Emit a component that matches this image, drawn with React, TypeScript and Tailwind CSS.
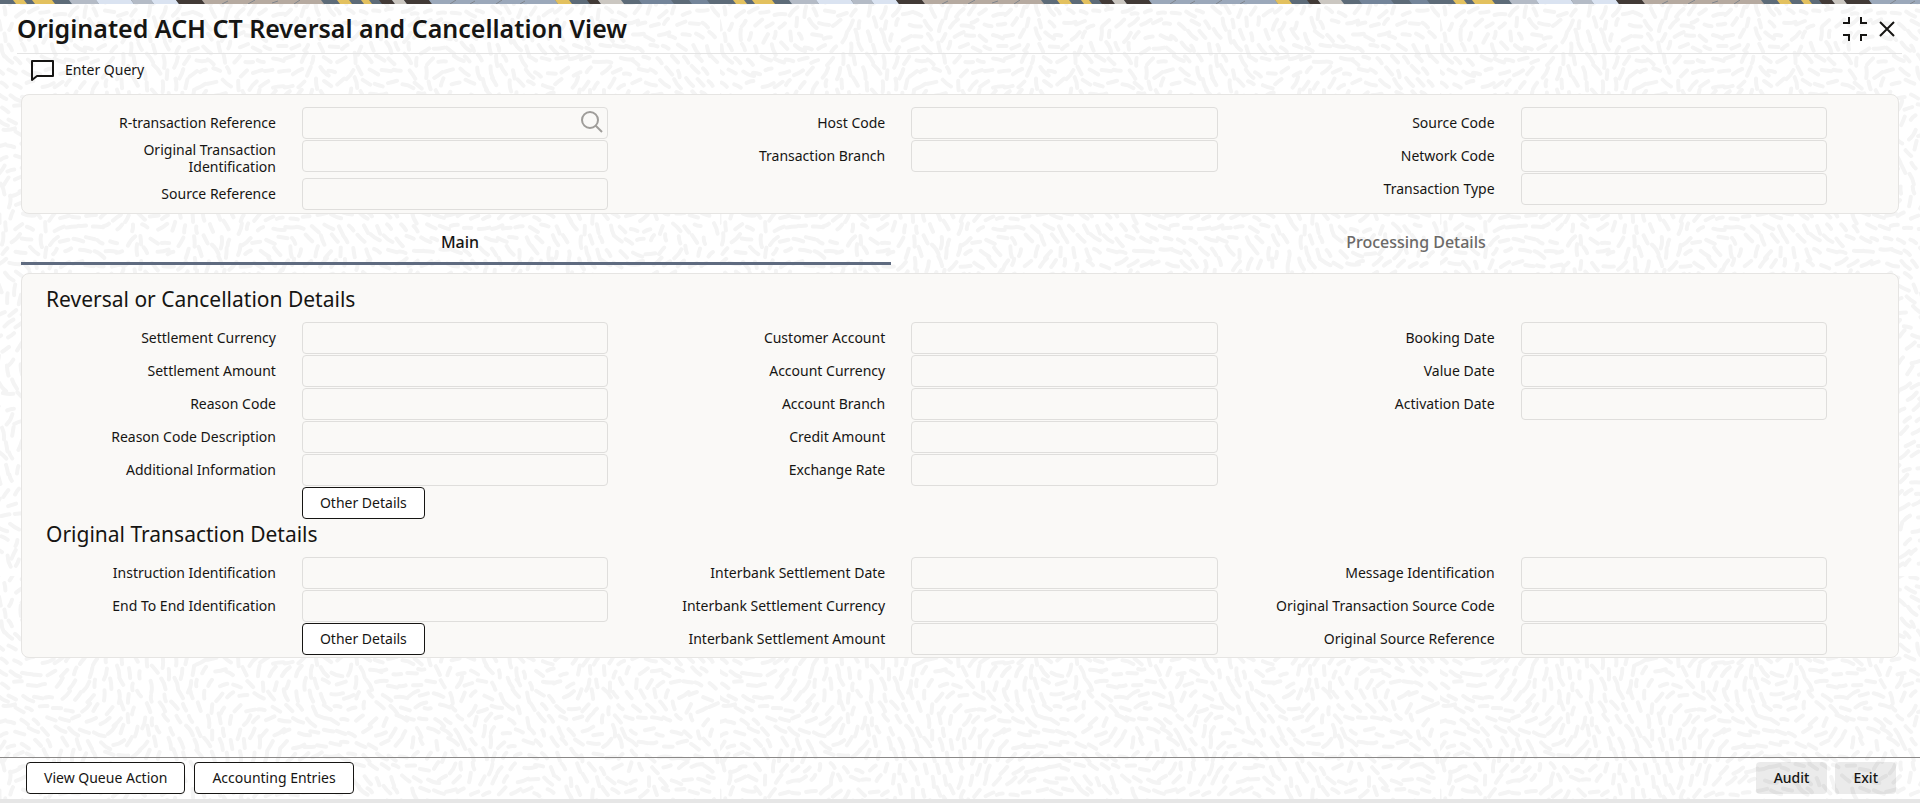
import { useState, type FormEvent, type ReactNode } from "react";

const TILE_W = 720;
const TILE_H = 576;

/* Short strokes that follow a smooth, tileable direction field */
function buildStrokes() {
  const cols = 56;
  const rows = 48;
  let d = "";
  for (let row = 0; row < rows; row++) {
    for (let col = 0; col < cols; col++) {
      const noise = Math.abs(Math.sin(row * 127 + col * 311) * 4375) % 1;
      const drift = Math.abs(Math.sin(row * 269 + col * 183) * 2713) % 1;
      const x = (col + (row % 2) / 2 + (noise - 0.5) * 0.5) * (TILE_W / cols);
      const y = (row + (drift - 0.5) * 0.5) * (TILE_H / rows);
      const u = (x / TILE_W) * Math.PI * 2;
      const v = (y / TILE_H) * Math.PI * 2;
      const angle =
        1.6 * Math.sin(3 * u + Math.sin(2 * v)) +
        1.2 * Math.cos(2 * v + Math.sin(2 * u)) +
        0.8 * Math.sin(4 * u - 3 * v) +
        (drift - 0.5) * 0.7;
      const half = 3 + noise * 3;
      const dx = Math.cos(angle) * half;
      const dy = Math.sin(angle) * half;
      const bend = (noise - 0.5) * 0.6;
      d += `M${(x - dx).toFixed(1)} ${(y - dy).toFixed(1)}Q${(x - dy * bend).toFixed(1)} ${(y + dx * bend).toFixed(1)} ${(x + dx).toFixed(1)} ${(y + dy).toFixed(1)}`;
    }
  }
  return d;
}

const strokes = buildStrokes();

/* [start, end, colour] of each slanted band in the top strip */
const bands: [number, number, string][] = [
  [14, 25, "#e3c15f"],
  [33, 53, "#e3c15f"],
  [70, 97, "#b4bbc6"],
  [97, 132, "#dae3f1"],
  [132, 152, "#b4bbc6"],
  [152, 177, "#dae3f1"],
  [177, 203, "#423a36"],
  [203, 322, "#b6aaa0"],
  [338, 350, "#e3c15f"],
  [362, 370, "#e3c15f"],
  [380, 393, "#423a36"],
  [393, 405, "#cbc7c1"],
  [405, 430, "#423a36"],
  [430, 556, "#9ba8ba"],
  [556, 570, "#e3c15f"],
  [588, 599, "#423a36"],
  [599, 622, "#cbc7c1"],
  [640, 672, "#74859a"],
  [690, 708, "#74859a"],
];

function Backdrop() {
  return (
    <svg className="absolute inset-0 -z-10 h-full w-full" aria-hidden="true">
      <defs>
        <pattern id="strokes" width={TILE_W} height={TILE_H} patternUnits="userSpaceOnUse">
          <path d={strokes} fill="none" stroke="#f4f4f4" strokeWidth="4" strokeLinecap="round" />
        </pattern>
      </defs>
      <rect width="100%" height="100%" fill="url(#strokes)" />
    </svg>
  );
}

function TopStrip() {
  return (
    <svg className="block h-1 w-full" aria-hidden="true">
      <defs>
        <pattern id="bands" width="720" height="4" patternUnits="userSpaceOnUse">
          <rect width="720" height="4" fill="#5d6b78" />
          {bands.map(([start, end, fill]) => (
            <polygon key={start} points={`${start - 1},0 ${end - 1},0 ${end + 2},4 ${start + 2},4`} fill={fill} />
          ))}
          <path d="M222 4l6-3M248 4l7-4M272 3l6-2M294 4l6-4M450 4l6-4M470 4l5-3M496 4l6-4M520 4l5-3" stroke="#80858c" fill="none" />
        </pattern>
      </defs>
      <rect width="100%" height="4" fill="url(#bands)" />
    </svg>
  );
}

function Field({ label, search = false }: { label: string; search?: boolean }) {
  const id = label.toLowerCase().replace(/\W+/g, "-");
  return (
    <div className="flex min-h-[33px]">
      <label htmlFor={id} className="w-[42%] shrink-0 self-center pt-px pr-[26px] pb-[3px] pl-2 text-right leading-[17px]">
        {label}
      </label>
      <div className="relative mr-[47px] h-8 grow">
        <input id={id} type="text" className="h-8 w-full rounded border border-[#dfdedc] bg-transparent px-2 focus:border-[#5f6b80] focus:outline-none" />
        {search && (
          <button type="button" aria-label="Search" className="absolute top-1 right-[5px]">
            <svg width="22" height="22" viewBox="0 0 22 22" fill="none" stroke="#9f9d9a" strokeWidth="2">
              <circle cx="9" cy="9" r="8" />
              <path d="M14.5 14.5l6.5 6.5" />
            </svg>
          </button>
        )}
      </div>
    </div>
  );
}

function OutlineButton({ children }: { children: ReactNode }) {
  return (
    <button type="button" className="h-8 rounded border border-[#161513] bg-white px-[17px] hover:bg-gray-50">
      {children}
    </button>
  );
}

function OtherDetails() {
  return (
    <div className="flex h-[33px] pl-[42%]">
      <OutlineButton>Other Details</OutlineButton>
    </div>
  );
}

function Columns({ columns, action = false }: { columns: string[][]; action?: boolean }) {
  return (
    <div className="grid grid-cols-3">
      {columns.map((fields, i) => (
        <div key={fields[0]}>
          {fields.map((label) => (
            <Field key={label} label={label} search={label === "R-transaction Reference"} />
          ))}
          {action && i === 0 && <OtherDetails />}
        </div>
      ))}
    </div>
  );
}

const summary = [
  ["R-transaction Reference", "Original Transaction Identification", "Source Reference"],
  ["Host Code", "Transaction Branch"],
  ["Source Code", "Network Code", "Transaction Type"],
];

const sections = [
  {
    title: "Reversal or Cancellation Details",
    columns: [
      ["Settlement Currency", "Settlement Amount", "Reason Code", "Reason Code Description", "Additional Information"],
      ["Customer Account", "Account Currency", "Account Branch", "Credit Amount", "Exchange Rate"],
      ["Booking Date", "Value Date", "Activation Date"],
    ],
  },
  {
    title: "Original Transaction Details",
    columns: [
      ["Instruction Identification", "End To End Identification"],
      ["Interbank Settlement Date", "Interbank Settlement Currency", "Interbank Settlement Amount"],
      ["Message Identification", "Original Transaction Source Code", "Original Source Reference"],
    ],
  },
];

export default function App() {
  const [tab, setTab] = useState("main");

  function handleSubmit(e: FormEvent<HTMLFormElement>) {
    e.preventDefault();
  }

  return (
    <form
      onSubmit={handleSubmit}
      className="relative isolate flex min-h-screen flex-col border-b-4 border-[#e6e6e6] bg-white font-['Noto_Sans','Open_Sans',sans-serif] text-sm text-[#161513]"
    >
      <Backdrop />
      <TopStrip />

      {/* Title bar */}
      <header className="mr-[18px] ml-[17px] flex h-[50px] items-center justify-between border-b border-[#e4e4e4]">
        <h1 className="text-[25px] font-semibold">Originated ACH CT Reversal and Cancellation View</h1>
        <div className="flex items-center gap-3 pr-[7px]">
          <button type="button" aria-label="Restore">
            <svg width="24" height="24" viewBox="0 0 24 24" fill="none" stroke="#161513" strokeWidth="2">
              <path d="M0 6h6V0M18 0v6h6M0 18h6v6M24 18h-6v6" />
            </svg>
          </button>
          <button type="button" aria-label="Close">
            <svg width="16" height="16" viewBox="0 0 16 16" fill="none" stroke="#161513" strokeWidth="2">
              <path d="M1 1l14 14M15 1L1 15" />
            </svg>
          </button>
        </div>
      </header>

      {/* Toolbar */}
      <div className="flex h-10 px-[31px] pt-1">
        <button type="button" className="flex h-6 items-center gap-[11px]">
          <svg width="23" height="21" viewBox="0 0 23 21" fill="none" stroke="#161513" strokeWidth="2" strokeLinejoin="round">
            <path d="M1 1h21v15H6l-5 4z" />
          </svg>
          Enter Query
        </button>
      </div>

      <section className="mx-[21px] rounded-lg border border-[#e6e5e3] bg-[#faf9f7] px-6 pt-3 pb-0.5">
        <Columns columns={summary} />
      </section>

      {/* Tabs */}
      <div role="tablist" className="mx-[21px] mb-2 flex h-[51px] gap-[42px] text-base font-medium">
        <button
          type="button"
          role="tab"
          aria-selected={tab === "main"}
          onClick={() => setTab("main")}
          className={`basis-[870px] border-b-[3px] pt-2 pl-2 ${
            tab === "main" ? "border-[#5f6b80]" : "border-transparent text-[#6b6967]"
          }`}
        >
          Main
        </button>
        <button
          type="button"
          role="tab"
          aria-selected={tab === "processing"}
          onClick={() => setTab("processing")}
          className={`grow border-b-[3px] pt-2 ${
            tab === "processing" ? "border-[#5f6b80]" : "border-transparent text-[#6b6967]"
          }`}
        >
          Processing Details
        </button>
      </div>

      <section className="mx-[21px] rounded-lg border border-[#e6e5e3] bg-[#faf9f7] px-6 pt-[11px] pb-px">
        {sections.map((section) => (
          <div key={section.title}>
            <h2 className="pb-[9px] text-[21px] leading-7">{section.title}</h2>
            <Columns columns={section.columns} action />
          </div>
        ))}
      </section>

      {/* Footer */}
      <footer className="mt-auto flex h-[42px] items-start justify-between border-t border-[#8b8988] pt-1 pr-6 pl-[26px]">
        <div className="flex gap-[9px]">
          <OutlineButton>View Queue Action</OutlineButton>
          <OutlineButton>Accounting Entries</OutlineButton>
        </div>
        <div className="flex gap-2">
          <button type="button" className="h-8 rounded bg-black/8 px-[18px] font-medium hover:bg-black/15">
            Audit
          </button>
          <button type="button" className="h-8 rounded bg-black/8 px-[18px] font-medium hover:bg-black/15">
            Exit
          </button>
        </div>
      </footer>
    </form>
  );
}
